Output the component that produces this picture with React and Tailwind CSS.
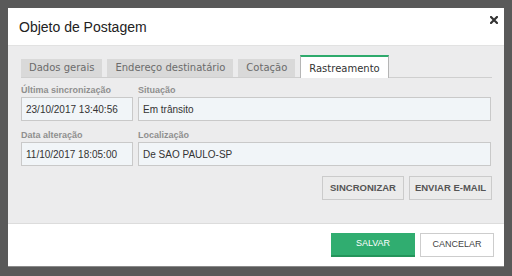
import React from 'react';

const tabs = [
  { name: 'Dados gerais' },
  { name: 'Endereço destinatário' },
  { name: 'Cotação' },
  { name: 'Rastreamento', active: true },
];

function Field({ label, value, className }) {
  return (
    <div className={className}>
      <div className="h-[11px] mb-[1px] text-[9px] leading-[11px] font-bold text-[#8f8f8f]">
        {label}
      </div>
      <div className="h-[24px] flex items-center px-[4px] bg-[#f1f5f8] border border-[#c9c9c9] text-[10px] text-[#333]">
        {value}
      </div>
    </div>
  );
}

function CloseIcon() {
  return (
    <svg width="8" height="8" viewBox="0 0 8 8">
      <path d="M1 1L7 7M7 1L1 7" stroke="#333" strokeWidth="2.2" strokeLinecap="square" />
    </svg>
  );
}

export default function App() {
  return (
    <div
      className="w-[512px] h-[276px] bg-[#595959] pt-[8px] pl-[8px] overflow-hidden"
      style={{ fontFamily: '"Liberation Sans", Arial, sans-serif' }}
    >
      <div className="w-[496px] h-[258px] bg-white flex flex-col shadow-[0_1px_0_#8a8a8a]">
        {/* Header */}
        <div className="h-[38px] flex items-center justify-between pl-[11px] pr-[6px] border-b border-[#e2e2e2]">
          <h1 className="text-[14px] text-[#222] pt-[1px]">Objeto de Postagem</h1>
          <div className="self-start mt-[8px]">
            <CloseIcon />
          </div>
        </div>

        {/* Body */}
        <div className="bg-[#ececed] pt-[10px] pl-[13px] pr-[12px] pb-[23px] border-b border-[#dcdcdc]">
          <div
            className="flex items-end gap-[5px] border-b border-[#cfcfcf] h-[22px]"
            style={{ fontFamily: '"DejaVu Sans", Verdana, sans-serif' }}
          >
            {tabs.map((t) =>
              t.active ? (
                <div
                  key={t.name}
                  className="h-[23px] -mb-[1px] px-[8px] pb-[2px] flex items-end bg-white border-t-2 border-t-[#2eaa6c] border-x border-x-[#b5b5b5] text-[10px] leading-[14px] text-[#333]"
                >
                  {t.name}
                </div>
              ) : (
                <div
                  key={t.name}
                  className="h-[18px] px-[8px] pb-[2px] flex items-end bg-[#d9d9d9] text-[10px] leading-[14px] text-[#6b6b6b]"
                >
                  {t.name}
                </div>
              )
            )}
          </div>

          <div className="flex gap-[5px] mt-[7px]">
            <Field className="w-[112px]" label="Última sincronização" value="23/10/2017 13:40:56" />
            <Field className="flex-1 mr-[1px]" label="Situação" value="Em trânsito" />
          </div>
          <div className="flex gap-[5px] mt-[9px]">
            <Field className="w-[112px]" label="Data alteração" value="11/10/2017 18:05:00" />
            <Field className="flex-1 mr-[1px]" label="Localização" value="De SAO PAULO-SP" />
          </div>

          <div className="flex justify-end gap-[5px] mt-[10px]">
            <button className="w-[82px] h-[24px] border border-[#cbcbcb] bg-[#ebebeb] text-[9.5px] font-bold text-[#555]">
              SINCRONIZAR
            </button>
            <button className="w-[83px] h-[24px] border border-[#cbcbcb] bg-[#ebebeb] text-[9.5px] font-bold text-[#555]">
              ENVIAR E-MAIL
            </button>
          </div>
        </div>

        {/* Footer */}
        <div className="flex-1 flex justify-end items-start gap-[5px] pt-[9px] pr-[10px]">
          <button className="w-[84px] h-[24px] bg-[#30ad70] border-b-2 border-[#23945a] text-[9px] text-white">
            SALVAR
          </button>
          <button className="w-[74px] h-[24px] bg-white border border-[#cdcdcd] text-[9px] text-[#444]">
            CANCELAR
          </button>
        </div>
      </div>
    </div>
  );
}
